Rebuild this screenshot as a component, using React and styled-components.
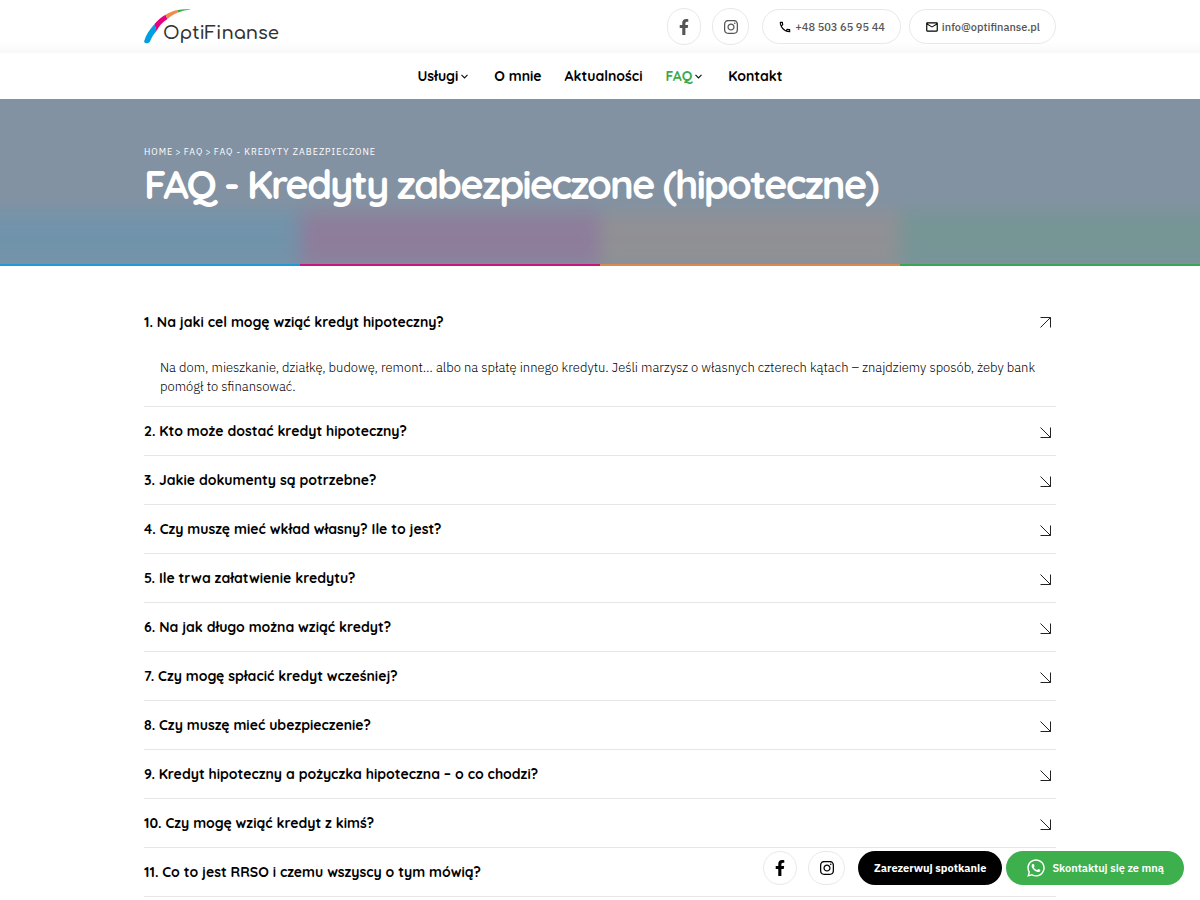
import React, { useState } from "react";
import styled, { createGlobalStyle } from "styled-components";
import { FaFacebookF, FaInstagram, FaWhatsapp } from "react-icons/fa";
import { MdOutlineCall, MdOutlineEmail } from "react-icons/md";

const questions = [
  {
    title: "1. Na jaki cel mogę wziąć kredyt hipoteczny?",
    answer:
      "Na dom, mieszkanie, działkę, budowę, remont… albo na spłatę innego kredytu. Jeśli marzysz o własnych czterech kątach – znajdziemy sposób, żeby bank pomógł to sfinansować.",
  },
  { title: "2. Kto może dostać kredyt hipoteczny?" },
  { title: "3. Jakie dokumenty są potrzebne?" },
  { title: "4. Czy muszę mieć wkład własny? Ile to jest?" },
  { title: "5. Ile trwa załatwienie kredytu?" },
  { title: "6. Na jak długo można wziąć kredyt?" },
  { title: "7. Czy mogę spłacić kredyt wcześniej?" },
  { title: "8. Czy muszę mieć ubezpieczenie?" },
  { title: "9. Kredyt hipoteczny a pożyczka hipoteczna – o co chodzi?" },
  { title: "10. Czy mogę wziąć kredyt z kimś?" },
  { title: "11. Co to jest RRSO i czemu wszyscy o tym mówią?" },
];

const menu = [
  { label: "Usługi", dropdown: true },
  { label: "O mnie" },
  { label: "Aktualności" },
  { label: "FAQ", dropdown: true, active: true },
  { label: "Kontakt" },
];

function Logo() {
  return (
    <svg width="140" height="38" viewBox="0 0 140 38" role="img" aria-label="OptiFinanse">
      <path d="M0.200 33 C2 27 5.500 21.500 10.500 16 L12.500 23 C9.500 26 7.500 30 6 33.500 C5 36 -0.500 36 0.200 33Z" fill="#009fe3" />
      <path d="M10.500 16 C13.500 12.500 17 9.200 21.500 6.800 L23.500 11 C18.500 14 15 18 12.500 23Z" fill="#e6007e" />
      <path d="M21.500 6.800 C25 4.600 29 3 33.500 2 L34 4.400 C30 5.800 26.500 8 23.500 11Z" fill="#f08a4b" />
      <path d="M33.500 2 C38 1.100 43 1 47 1.500 C42 2.100 38 2.900 34 4.400Z" fill="#3aaa4b" />
      <LogoText x="19" y="31">OptiFinanse</LogoText>
    </svg>
  );
}

function Arrow({ open }) {
  return (
    <svg width="12" height="12" viewBox="0 0 12 12" fill="none" stroke="#222" aria-hidden="true">
      {open ? (
        <path d="M0.500 10.500 L10.500 0.500 M0.500 0.500 H10.500 V10.500" />
      ) : (
        <path d="M0.500 1.500 L10.500 11.500 M10.500 1.500 V11.500 H0.500" />
      )}
    </svg>
  );
}

function Chevron() {
  return (
    <svg width="7" height="5" viewBox="0 0 7 5" fill="none" stroke="#111" strokeWidth="1.200" aria-hidden="true">
      <path d="M0.500 0.800 L3.500 3.800 L6.500 0.800" />
    </svg>
  );
}

export default function App() {
  const [opened, setOpened] = useState(0);

  return (
    <>
      <GlobalStyle />
      <TopBar>
        <TopInner>
          <LogoLink href="#"><Logo /></LogoLink>
          <Contacts>
            <Socials>
              <Social href="#" aria-label="Facebook"><FaFacebookF size={16} /></Social>
              <Social href="#" aria-label="Instagram" $wide><FaInstagram size={16} /></Social>
            </Socials>
            <Phones>
              <Contact href="tel:+48503659544"><MdOutlineCall size={14} />+48 503 65 95 44</Contact>
              <Contact href="mailto:info@optifinanse.pl"><MdOutlineEmail size={14} />info@optifinanse.pl</Contact>
            </Phones>
          </Contacts>
        </TopInner>
      </TopBar>
      <Nav>
        {menu.map(({ label, dropdown, active }) => (
          <NavItem href="#" key={label} $active={active} $dropdown={dropdown}>
            {label}
            {dropdown && <Chevron />}
          </NavItem>
        ))}
      </Nav>
      <Hero>
        <Glow>
          {stripes.map((color) => <Stripe key={color} $color={color} />)}
        </Glow>
        <HeroInner>
          <Breadcrumbs aria-label="Breadcrumb">
            <a href="#">Home</a>
            <span>&gt;</span>
            <a href="#">FAQ</a>
            <span>&gt;</span>
            <span>FAQ - Kredyty zabezpieczone</span>
          </Breadcrumbs>
          <Title>FAQ - Kredyty zabezpieczone (hipoteczne)</Title>
        </HeroInner>
        <Line>
          {stripes.map((color) => <Stripe key={color} $color={color} />)}
        </Line>
      </Hero>
      <Faq>
        {questions.map(({ title, answer }, index) => (
          <Item key={title}>
            <Heading>
              <Question
                type="button"
                aria-expanded={opened === index}
                onClick={() => setOpened(opened === index ? -1 : index)}
              >
                {title}
                <Arrow open={opened === index} />
              </Question>
            </Heading>
            {opened === index && answer && <Answer>{answer}</Answer>}
          </Item>
        ))}
      </Faq>
      <Floating>
        <Socials>
          <Social href="#" aria-label="Facebook" $dark><FaFacebookF size={16} /></Social>
          <Social href="#" aria-label="Instagram" $dark $wide><FaInstagram size={16} /></Social>
        </Socials>
        <Actions>
          <Action type="button">Zarezerwuj spotkanie</Action>
          <Action type="button" $green><FaWhatsapp size={20} />Skontaktuj się ze mną</Action>
        </Actions>
      </Floating>
    </>
  );
}

/*--- CSS ---*/

const stripes = ["#1d9bd8", "#c8177c", "#d98a50", "#3aa655"];

const headingFont = `Quicksand, Lato, "Noto Sans", sans-serif`;
const bodyFont = `"IBM Plex Sans", "Noto Sans", sans-serif`;

const GlobalStyle = createGlobalStyle`
  * {
    box-sizing: border-box;
  }
  body {
    margin: 0;
    background: #fff;
    color: #000;
    font-family: ${bodyFont};
  }
  a {
    color: inherit;
    text-decoration: none;
  }
  button {
    border: 0;
    cursor: pointer;
  }
`;

const TopBar = styled.header`
  background: linear-gradient(#fff 80%, #f8f8f8);
`;

const TopInner = styled.div`
  width: 76%;
  height: 53px;
  margin: 0 auto;
  display: flex;
  align-items: center;
  justify-content: space-between;
`;

const LogoLink = styled.a`
  display: flex;
`;

const LogoText = styled.text`
  font-family: Comfortaa, ${headingFont};
  font-size: 18px;
  font-weight: 600;
  fill: #333;
`;

const Contacts = styled.div`
  display: flex;
  align-items: center;
  gap: 13px;
`;

const Socials = styled.div`
  display: flex;
  align-items: center;
  gap: 11px;
`;

const Phones = styled.div`
  display: flex;
  gap: 8px;
`;

const Social = styled.a`
  width: ${({ $wide }) => ($wide ? 37 : 34)}px;
  height: ${({ $dark }) => ($dark ? 34 : 37)}px;
  display: flex;
  align-items: center;
  justify-content: center;
  border: 1px solid #e8e8e8;
  border-radius: 18px;
  background: #fff;
  color: ${({ $dark }) => ($dark ? "#000" : "#555")};
`;

const Contact = styled.a`
  height: 35px;
  padding: 0 15px;
  display: flex;
  align-items: center;
  gap: 3px;
  border: 1px solid #e8e8e8;
  border-radius: 18px;
  color: #555;
  font-size: 11px;
  font-weight: 500;

  svg {
    color: #000;
  }
`;

const Nav = styled.nav`
  height: 46px;
  display: flex;
  align-items: center;
  justify-content: center;
  gap: 23px;
  background: #fff;
`;

const NavItem = styled.a`
  padding-right: ${({ $dropdown }) => ($dropdown ? 3 : 0)}px;
  display: flex;
  align-items: center;
  gap: 3px;
  color: ${({ $active }) => ($active ? "#3aaa4b" : "#000")};
  font-family: ${headingFont};
  font-size: 14px;
  font-weight: 700;
`;

const Hero = styled.section`
  position: relative;
  overflow: hidden;
  background: #8292a2;
  color: #fff;
`;

const Stripe = styled.span`
  background: ${({ $color }) => $color};
`;

const Glow = styled.div`
  position: absolute;
  inset: auto 0 0;
  height: 54px;
  display: grid;
  grid-template-columns: repeat(4, 1fr);
  opacity: 0.16;
  filter: blur(9px);

  /* bleed past the window so the blur does not fade at the sides */
  ${Stripe}:first-child {
    margin-left: -30px;
  }
  ${Stripe}:last-child {
    margin-right: -30px;
  }
`;

const Line = styled.div`
  position: relative;
  height: 2px;
  display: grid;
  grid-template-columns: repeat(4, 1fr);
`;

const HeroInner = styled.div`
  position: relative;
  width: 76%;
  margin: 0 auto;
  padding: 45px 0 56px;
`;

const Breadcrumbs = styled.nav`
  display: flex;
  gap: 2px;
  font-size: 9px;
  line-height: 16px;
  letter-spacing: 1px;
  text-transform: uppercase;
`;

const Title = styled.h1`
  margin: 0;
  font-family: ${headingFont};
  font-size: 40px;
  line-height: 48px;
  font-weight: 700;
  letter-spacing: -2px;
`;

const Faq = styled.main`
  width: 76%;
  margin: 0 auto;
  padding-top: 32px;
`;

const Item = styled.article`
  border-bottom: 1px solid #e6e6e6;
`;

const Heading = styled.h2`
  margin: 0;
  font-size: 14px;
`;

const Question = styled.button`
  width: 100%;
  height: 48px;
  padding: 0 4px 0 0;
  display: flex;
  align-items: center;
  justify-content: space-between;
  background: none;
  color: #000;
  font-family: ${headingFont};
  font-size: 14px;
  font-weight: 700;
  text-align: left;

  svg {
    margin-top: 2px;
  }
`;

const Answer = styled.p`
  margin: 0;
  padding: 12px 4px 10px 16px;
  color: #000;
  font-size: 13px;
  font-weight: 300;
  line-height: 19px;
`;

const Floating = styled.aside`
  position: fixed;
  right: 16px;
  bottom: 15px;
  display: flex;
  align-items: center;
  gap: 13px;
`;

const Actions = styled.div`
  display: flex;
  gap: 4px;
`;

const Action = styled.button`
  height: 34px;
  padding: 0 ${({ $green }) => ($green ? 20 : 16)}px;
  display: flex;
  align-items: center;
  gap: 6px;
  border-radius: 17px;
  background: ${({ $green }) => ($green ? "#3daf4d" : "#000")};
  color: #fff;
  font-family: ${bodyFont};
  font-size: 11px;
  font-weight: ${({ $green }) => ($green ? 600 : 700)};
`;
